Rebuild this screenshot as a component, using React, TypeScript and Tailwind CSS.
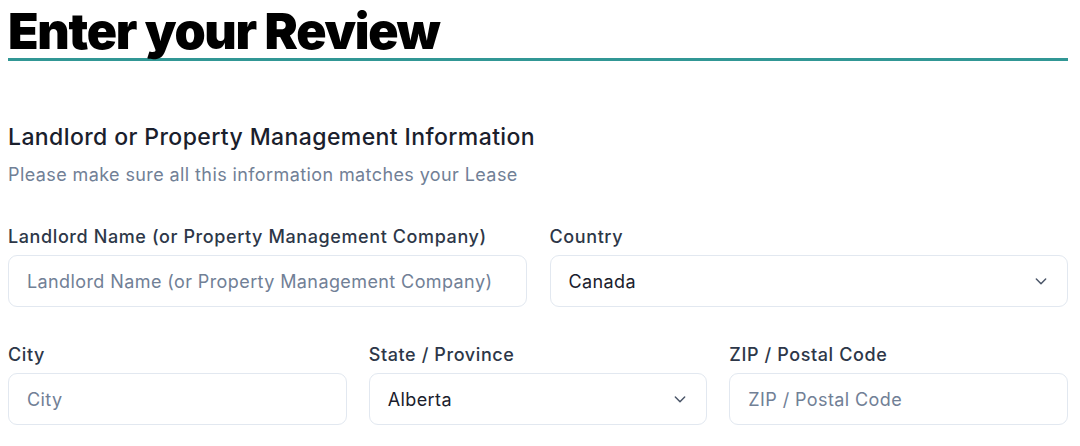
const font = { fontFamily: "Inter, 'Noto Sans', sans-serif" };

const Chevron = () => (
  <svg width="16" height="16" viewBox="0 0 24 24" className="text-[#4a5568]">
    <path
      d="M5 9l7 7 7-7"
      fill="none"
      stroke="currentColor"
      strokeWidth="2.2"
      strokeLinecap="round"
      strokeLinejoin="round"
    />
  </svg>
);

const Field = ({ label, placeholder }: { label: string; placeholder: string }) => (
  <div className="flex flex-col flex-1 min-w-0">
    <label className="text-[18px] leading-[28px] font-medium tracking-[0.6px] text-[#2d3748] mb-[4px]">
      {label}
    </label>
    <input
      placeholder={placeholder}
      className="h-[52px] w-full rounded-[9px] border border-[#e2e8f0] px-[18px] text-[18px] tracking-[0.4px] text-[#1a202c] placeholder:text-[#718096] outline-none"
    />
  </div>
);

const SelectField = ({ label, value }: { label: string; value: string }) => (
  <div className="flex flex-col flex-1 min-w-0">
    <label className="text-[18px] leading-[28px] font-medium tracking-[0.6px] text-[#2d3748] mb-[4px]">
      {label}
    </label>
    <div className="h-[52px] w-full rounded-[9px] border border-[#e2e8f0] pl-[18px] pr-[18px] flex items-center justify-between">
      <span className="text-[18px] tracking-[0.4px] text-[#1a202c]">{value}</span>
      <Chevron />
    </div>
  </div>
);

export default function App() {
  return (
    <div className="bg-white w-[1080px] h-[446px] overflow-hidden pl-[8px] pr-[12px]" style={font}>
      <h1 className="pt-[6px] pb-[2px] text-[50px] leading-[50px] font-black text-black tracking-[-1.3px] border-b-[3px] border-[#319795]">
        Enter your Review
      </h1>
      <h2 className="mt-[62px] text-[23px] leading-[28px] font-medium tracking-[0.4px] text-[#1a202c]">
        Landlord or Property Management Information
      </h2>
      <p className="mt-[10px] text-[18px] leading-[28px] tracking-[0.4px] text-[#718096]">
        Please make sure all this information matches your Lease
      </p>
      <div className="mt-[34px] flex gap-[23px]">
        <Field
          label="Landlord Name (or Property Management Company)"
          placeholder="Landlord Name (or Property Management Company)"
        />
        <SelectField label="Country" value="Canada" />
      </div>
      <div className="mt-[34px] flex gap-[22px]">
        <Field label="City" placeholder="City" />
        <SelectField label="State / Province" value="Alberta" />
        <Field label="ZIP / Postal Code" placeholder="ZIP / Postal Code" />
      </div>
    </div>
  );
}
